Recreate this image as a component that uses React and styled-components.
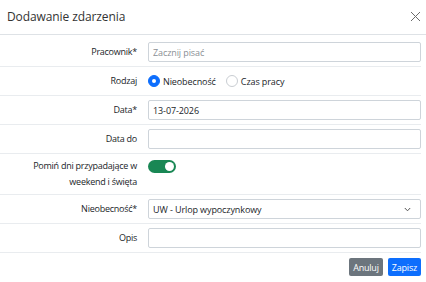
import React from "react";
import styled, { createGlobalStyle } from "styled-components";

const GlobalStyle = createGlobalStyle`
  html, body { margin: 0; padding: 0; background: #fff; }
  body { font-family: "Open Sans", "Noto Sans", sans-serif; color: #212529; }
  * { box-sizing: border-box; }
`;

const Modal = styled.div`
  width: 426px;
  height: 282px;
  background: #fff;
  display: flex;
  flex-direction: column;
`;

const Header = styled.div`
  height: 35px;
  display: flex;
  align-items: center;
  justify-content: space-between;
  padding: 0 5px 1px 7px;
  border-bottom: 1px solid #dee2e6;
`;

const Title = styled.h5`
  margin: 0;
  font-size: 12px;
  font-weight: 400;
  color: #333;
  letter-spacing: -0.1px;
`;

const CloseButton = styled.button`
  border: 0;
  background: transparent;
  padding: 0;
  width: 11px;
  height: 11px;
  display: flex;
  color: #6c6c6c;
  cursor: pointer;
`;

const Body = styled.div`
  padding: 3px 5px 0 0;
`;

const Row = styled.div`
  display: grid;
  grid-template-columns: 137px 1fr;
  column-gap: 11px;
  align-items: ${(p) => (p.$top ? "start" : "center")};
  padding: 4px 0;
  border-bottom: 1px solid #e9ecef;
`;

const Label = styled.label`
  text-align: right;
  font-size: 9px;
  line-height: 16px;
  letter-spacing: -0.25px;
  color: #212529;
`;

const Input = styled.input`
  display: block;
  width: 100%;
  height: 20px;
  padding: 0 4px;
  border: 1px solid #ced4da;
  border-radius: 2px;
  font-family: inherit;
  font-size: 9px;
  letter-spacing: -0.1px;
  color: #212529;
  outline: none;
  &::placeholder { color: #8a8f94; }
`;

const SelectBox = styled.div`
  position: relative;
  height: 20px;
  border: 1px solid #ced4da;
  border-radius: 2px;
  display: flex;
  align-items: center;
  justify-content: space-between;
  padding: 0 9px 0 4px;
  font-size: 9px;
  letter-spacing: -0.1px;
  color: #212529;
`;

const RadioGroup = styled.div`
  display: flex;
  align-items: center;
  height: 20px;
  gap: 10px;
`;

const RadioOption = styled.label`
  display: flex;
  align-items: center;
  gap: 3px;
  font-size: 9px;
  letter-spacing: -0.1px;
  color: #212529;
`;

const RadioDot = styled.span`
  width: 12px;
  height: 12px;
  border-radius: 50%;
  flex: none;
  background: ${(p) => (p.$checked ? "#0d6efd" : "#fff")};
  border: 1px solid ${(p) => (p.$checked ? "#0d6efd" : "#c9cdd2")};
  display: flex;
  align-items: center;
  justify-content: center;
  &::after {
    content: "";
    width: 4px;
    height: 4px;
    border-radius: 50%;
    background: #fff;
    display: ${(p) => (p.$checked ? "block" : "none")};
  }
`;

const Switch = styled.span`
  margin-top: 2px;
  width: 28px;
  height: 13px;
  border-radius: 7px;
  background: #198754;
  display: flex;
  align-items: center;
  justify-content: flex-end;
  padding: 0 2px;
  &::after {
    content: "";
    width: 9px;
    height: 9px;
    border-radius: 50%;
    background: #fff;
  }
`;

const Footer = styled.div`
  display: flex;
  justify-content: flex-end;
  gap: 5px;
  padding: 5px 5px 0 0;
`;

const Button = styled.button`
  height: 18px;
  padding: 0 4px;
  border: 0;
  border-radius: 2px;
  font-family: inherit;
  font-size: 9px;
  font-weight: 500;
  letter-spacing: -0.2px;
  color: #fff;
  background: ${(p) => (p.$primary ? "#0d6efd" : "#6c757d")};
  cursor: pointer;
`;

export default function App() {
  return (
    <Modal>
      <GlobalStyle />
      <Header>
        <Title>Dodawanie zdarzenia</Title>
        <CloseButton aria-label="Zamknij">
          <svg width="11" height="11" viewBox="0 0 11 11">
            <path d="M1 1 L10 10 M10 1 L1 10" stroke="currentColor" strokeWidth="1" fill="none" />
          </svg>
        </CloseButton>
      </Header>
      <Body>
        <Row>
          <Label>Pracownik*</Label>
          <Input placeholder="Zacznij pisać" />
        </Row>
        <Row>
          <Label>Rodzaj</Label>
          <RadioGroup>
            <RadioOption>
              <RadioDot $checked />
              Nieobecność
            </RadioOption>
            <RadioOption>
              <RadioDot />
              Czas pracy
            </RadioOption>
          </RadioGroup>
        </Row>
        <Row>
          <Label>Data*</Label>
          <Input defaultValue="13-07-2026" />
        </Row>
        <Row>
          <Label>Data do</Label>
          <Input />
        </Row>
        <Row $top>
          <Label>
            Pomiń dni przypadające w<br />weekend i święta
          </Label>
          <Switch />
        </Row>
        <Row>
          <Label>Nieobecność*</Label>
          <SelectBox>
            <span>UW - Urlop wypoczynkowy</span>
            <svg width="7" height="5" viewBox="0 0 7 5">
              <path d="M0.8 1 L3.5 3.8 L6.2 1" stroke="#555" strokeWidth="1" fill="none" />
            </svg>
          </SelectBox>
        </Row>
        <Row>
          <Label>Opis</Label>
          <Input />
        </Row>
      </Body>
      <Footer>
        <Button>Anuluj</Button>
        <Button $primary>Zapisz</Button>
      </Footer>
    </Modal>
  );
}
